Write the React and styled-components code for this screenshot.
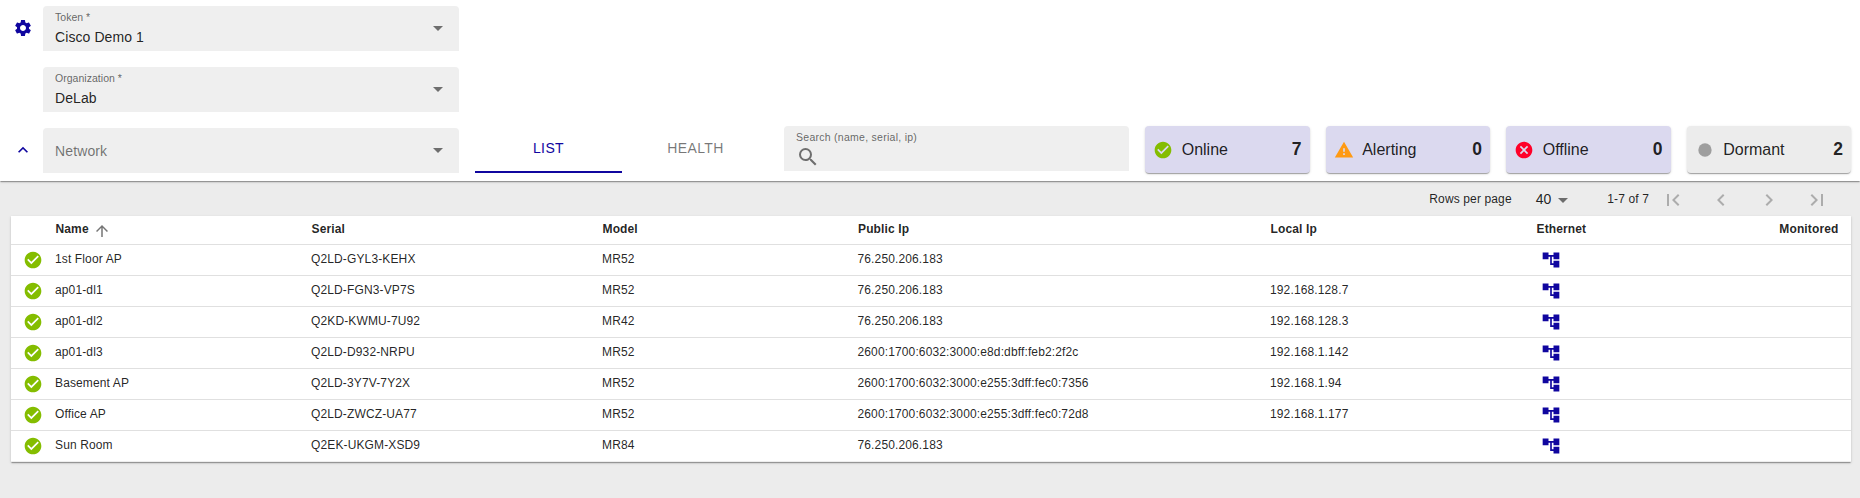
import React from "react";
import styled, { createGlobalStyle } from "styled-components";
import {
  MdSettings, MdKeyboardArrowUp, MdArrowDropDown, MdSearch, MdCheckCircle, MdWarning, MdCancel,
  MdFiberManualRecord, MdFirstPage, MdChevronLeft, MdChevronRight, MdLastPage, MdArrowUpward,
} from "react-icons/md";

const Global = createGlobalStyle`
  *, *::before, *::after { box-sizing: border-box; }
  body {
    margin: 0;
    background: #ececec;
    color: rgba(0, 0, 0, 0.87);
    font-family: "Liberation Sans", Arial, sans-serif;
    font-size: 14px;
  }
  svg { display: block; flex: none; }
`;

const elevation = `0 2px 1px -1px rgba(0,0,0,.2), 0 1px 1px 0 rgba(0,0,0,.14), 0 1px 3px 0 rgba(0,0,0,.12)`;
const primary = "#10069f";

const Page = styled.div`
  min-height: 498px;
`;

const TopBar = styled.header`
  display: flex;
  align-items: flex-end;
  height: 181px;
  padding: 6px 9px 8px 13px;
  background: #fff;
  box-shadow: ${elevation};
`;

const Selectors = styled.div`
  display: grid;
  grid-template-columns: 20px 416px;
  grid-auto-rows: 45px;
  gap: 16px 10px;
  align-items: center;
`;

const BarIcon = styled.div`
  grid-column: 1;
  padding-bottom: 1px;
  color: ${primary};
`;

const Select = styled.div`
  grid-column: 2;
  display: flex;
  align-items: center;
  justify-content: space-between;
  height: 45px;
  padding: 0 9px 0 12px;
  background: #efefef;
  border-radius: 4px 4px 0 0;
  svg { color: rgba(0, 0, 0, 0.54); margin-bottom: 1px; }
`;

const SelectText = styled.div`
  display: flex;
  flex-direction: column;
`;

const Label = styled.span`
  font-size: 10.5px;
  line-height: 14px;
  letter-spacing: ${(p) => p.$spacing || "0.03px"};
  color: rgba(0, 0, 0, 0.6);
`;

const Value = styled.span`
  margin-top: 3px;
  padding-bottom: 1px;
  line-height: 20px;
  letter-spacing: 0.08px;
`;

const Placeholder = styled.span`
  line-height: 20px;
  letter-spacing: 0.13px;
  color: rgba(0, 0, 0, 0.54);
`;

const Tabs = styled.nav`
  display: flex;
  margin-left: 16px;
`;

const Tab = styled.div`
  width: ${(p) => p.$width}px;
  height: 48px;
  padding-top: 15px;
  text-align: center;
  line-height: 17px;
  letter-spacing: 0.4px;
  color: ${(p) => (p.$active ? primary : "rgba(0, 0, 0, 0.54)")};
  border-bottom: 2px solid ${(p) => (p.$active ? primary : "transparent")};
`;

const SearchField = styled.div`
  width: 345px;
  height: 45px;
  margin: 0 16px 2px 15px;
  padding: 4px 12px 0;
  background: #efefef;
  border-radius: 4px 4px 0 0;
  svg { color: rgba(0, 0, 0, 0.54); margin-top: 1px; }
  span { display: block; }
`;

const Statuses = styled.div`
  flex: 1;
  display: grid;
  grid-template-columns: repeat(4, 1fr);
  gap: 16px;
`;

const StatusCard = styled.div`
  display: flex;
  align-items: center;
  height: 47px;
  padding: 0 8px;
  border-radius: 4px;
  background: ${(p) => (p.$selected ? "#dbd9ef" : "#ececec")};
  box-shadow: ${elevation};
  font-size: 16px;
  svg { color: ${(p) => p.$color}; margin-right: 8.7px; }
`;

const Count = styled.b`
  margin-left: auto;
  font-size: 17.5px;
`;

const Pagination = styled.div`
  display: flex;
  align-items: center;
  justify-content: flex-end;
  height: 35px;
  padding: 1px 19px 0 0;
  font-size: 12px;
  letter-spacing: 0.13px;
`;

const PageSize = styled.div`
  display: flex;
  align-items: center;
  margin: 0 32px 0 24px;
  font-size: 14px;
  letter-spacing: 0;
  svg { color: rgba(0, 0, 0, 0.54); margin-top: 2px; }
`;

const PageButton = styled.span`
  display: flex;
  justify-content: center;
  width: 48px;
  padding-top: 2px;
  color: rgba(0, 0, 0, 0.27);
`;

const Sheet = styled.section`
  margin: 0 9px 0 11px;
  background: #fff;
  box-shadow: ${elevation};
`;

const Table = styled.table`
  width: 100%;
  table-layout: fixed;
  border-collapse: separate;
  border-spacing: 0;
  font-size: 12px;
  line-height: 14px;
  letter-spacing: 0.13px;
  white-space: nowrap;
`;

const HeadCell = styled.th`
  height: 29px;
  padding: ${(p) => (p.$end ? "0 12.5px 3px 0" : "0 6px 3px 6.5px")};
  text-align: ${(p) => (p.$end ? "right" : "left")};
  border-bottom: 1px solid #e0e0e0;
`;

const SortLabel = styled.span`
  display: flex;
  align-items: center;
  gap: 4px;
  svg { color: rgba(0, 0, 0, 0.54); margin: 3px 0 -1px; }
`;

const Cell = styled.td`
  height: 31px;
  padding: 0 6px 2px;
  border-bottom: 1px solid #e0e0e0;
  tr:last-child > & { border-bottom-color: #eee; }
`;

const IconCell = styled(Cell)`
  padding: 0 0 0 ${(p) => (p.$primary ? 11 : 12)}px;
  color: ${(p) => (p.$primary ? primary : "#84bd00")};
`;

const TreeIcon = () => (
  <svg width="20" height="20" viewBox="0 0 24 24" fill="currentColor">
    <path d="M22 11V3h-7v3H9V3H2v8h7V8h2v10h4v3h7v-8h-7v3h-2V8h2v3z" />
  </svg>
);

const columns = [38, 256, 291, 255.5, 412.5, 266, 160, 161];

const statuses = [
  { name: "Online", count: 7, icon: MdCheckCircle, color: "#84bd00", selected: true },
  { name: "Alerting", count: 0, icon: MdWarning, color: "#ff9a13", selected: true },
  { name: "Offline", count: 0, icon: MdCancel, color: "#ff0029", selected: true },
  { name: "Dormant", count: 2, icon: MdFiberManualRecord, color: "#9e9e9e" },
];

const devices = [
  ["1st Floor AP", "Q2LD-GYL3-KEHX", "MR52", "76.250.206.183", ""],
  ["ap01-dl1", "Q2LD-FGN3-VP7S", "MR52", "76.250.206.183", "192.168.128.7"],
  ["ap01-dl2", "Q2KD-KWMU-7U92", "MR42", "76.250.206.183", "192.168.128.3"],
  ["ap01-dl3", "Q2LD-D932-NRPU", "MR52", "2600:1700:6032:3000:e8d:dbff:feb2:2f2c", "192.168.1.142"],
  ["Basement AP", "Q2LD-3Y7V-7Y2X", "MR52", "2600:1700:6032:3000:e255:3dff:fec0:7356", "192.168.1.94"],
  ["Office AP", "Q2LD-ZWCZ-UA77", "MR52", "2600:1700:6032:3000:e255:3dff:fec0:72d8", "192.168.1.177"],
  ["Sun Room", "Q2EK-UKGM-XSD9", "MR84", "76.250.206.183", ""],
];

function Dropdown({ label, value }) {
  return (
    <Select>
      {value ? (
        <SelectText>
          <Label>{label}</Label>
          <Value>{value}</Value>
        </SelectText>
      ) : (
        <Placeholder>{label}</Placeholder>
      )}
      <MdArrowDropDown size={24} />
    </Select>
  );
}

export default function App() {
  return (
    <Page>
      <Global />
      <TopBar>
        <Selectors>
          <BarIcon><MdSettings size={20} /></BarIcon>
          <Dropdown label="Token *" value="Cisco Demo 1" />
          <Dropdown label="Organization *" value="DeLab" />
          <BarIcon><MdKeyboardArrowUp size={20} /></BarIcon>
          <Dropdown label="Network" />
        </Selectors>
        <Tabs>
          <Tab $width={147} $active>LIST</Tab>
          <Tab $width={147}>HEALTH</Tab>
        </Tabs>
        <SearchField>
          <Label $spacing="0.27px">Search (name, serial, ip)</Label>
          <MdSearch size={24} />
        </SearchField>
        <Statuses>
          {statuses.map(({ name, count, icon: Icon, color, selected }) => (
            <StatusCard key={name} $color={color} $selected={selected}>
              <Icon size={20} />
              {name}
              <Count>{count}</Count>
            </StatusCard>
          ))}
        </Statuses>
      </TopBar>
      <Pagination>
        Rows per page
        <PageSize>40<MdArrowDropDown size={24} /></PageSize>
        1-7 of 7
        <PageButton><MdFirstPage size={24} /></PageButton>
        <PageButton><MdChevronLeft size={24} /></PageButton>
        <PageButton><MdChevronRight size={24} /></PageButton>
        <PageButton><MdLastPage size={24} /></PageButton>
      </Pagination>
      <Sheet>
        <Table>
          <colgroup>{columns.map((w, i) => <col key={i} width={w} />)}</colgroup>
          <thead>
            <tr>
              <HeadCell />
              <HeadCell><SortLabel>Name <MdArrowUpward size={18} /></SortLabel></HeadCell>
              <HeadCell>Serial</HeadCell>
              <HeadCell>Model</HeadCell>
              <HeadCell>Public Ip</HeadCell>
              <HeadCell>Local Ip</HeadCell>
              <HeadCell>Ethernet</HeadCell>
              <HeadCell $end>Monitored</HeadCell>
            </tr>
          </thead>
          <tbody>
            {devices.map((device) => (
              <tr key={device[0]}>
                <IconCell><MdCheckCircle size={20} /></IconCell>
                {device.map((text, i) => <Cell key={i}>{text}</Cell>)}
                <IconCell $primary><TreeIcon /></IconCell>
                <Cell />
              </tr>
            ))}
          </tbody>
        </Table>
      </Sheet>
    </Page>
  );
}
